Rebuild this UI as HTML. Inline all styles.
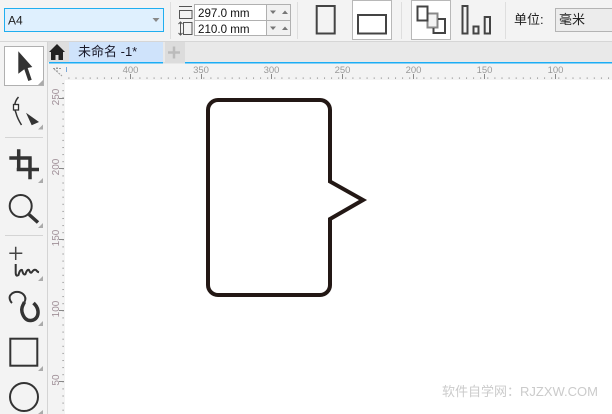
<!DOCTYPE html>
<html lang="zh"><head><meta charset="utf-8"><style>
html,body{margin:0;padding:0;width:612px;height:414px;overflow:hidden;background:#f3f3f3}
svg{position:absolute;left:0;top:0}
text{font-family:"Liberation Sans","Noto Sans CJK SC",sans-serif}
</style></head><body>
<svg width="612" height="414" viewBox="0 0 612 414" xmlns="http://www.w3.org/2000/svg">
<defs>
<pattern id="hd" x="4.5" y="77" width="7.1" height="2" patternUnits="userSpaceOnUse"><rect width="1" height="1.2" y=".5" fill="#888"/></pattern>
<pattern id="vd" x="62" y="5" width="2" height="7.1" patternUnits="userSpaceOnUse"><rect width="1.2" height="1" x=".5" fill="#888"/></pattern>
</defs>
<rect width="612" height="414" fill="#f3f3f3"/>
<!-- top bar -->
<rect x="0" y="41" width="612" height="1" fill="#d6d6d6"/>
<rect x="4.500" y="8.500" width="159" height="23" fill="#dff0fe" stroke="#20aeef"/>
<text x="8" y="24.500" font-size="12" fill="#222">A4</text>
<path d="M152.500 18h7l-3.500 4z" fill="#888"/>
<rect x="170" y="2" width="1" height="37" fill="#dedede"/>
<!-- page size icons -->
<g fill="none" stroke="#555" stroke-width="1">
<path d="M179 6.500h13M179.500 10.500h12.500v8h-12.500z"/>
<path d="M180.500 22v13M178.500 24l2-2 2 2M178.500 33l2 2 2-2M183.500 22.500h8.500v12h-8.500z"/>
</g>
<rect x="194.500" y="4.500" width="96" height="31" fill="#fff" stroke="#b0b0b0"/>
<rect x="266.500" y="5" width="24" height="30" fill="#f1f1f1"/>
<path d="M266.500 4v32M290.500 4v32M194 20.500h97" stroke="#b0b0b0"/>
<text x="198" y="17" font-size="11.600" fill="#111">297.0 mm</text>
<text x="198" y="33" font-size="11.600" fill="#111">210.0 mm</text>
<path d="M270 10.500h6l-3 3.500zM282 14h6l-3-3.500zM270 26.500h6l-3 3.500zM282 30h6l-3-3.500z" fill="#777"/>
<rect x="297" y="2" width="1" height="37" fill="#dedede"/>
<!-- orientation -->
<rect x="316.700" y="6" width="18" height="27.500" fill="none" stroke="#444" stroke-width="2"/>
<rect x="352.500" y=".5" width="39" height="39" fill="#fff" stroke="#b8b8b8"/>
<rect x="358" y="15" width="28" height="18.500" fill="none" stroke="#444" stroke-width="2"/>
<rect x="401" y="2" width="1" height="37" fill="#dedede"/>
<rect x="411.500" y=".5" width="39" height="39" fill="#fff" stroke="#b8b8b8"/>
<rect x="427.500" y="13.500" width="10" height="14" fill="#f3f3f3" stroke="#888" stroke-width="2"/>
<g fill="none" stroke="#444" stroke-width="2">
<rect x="417.500" y="6.500" width="10" height="14"/>
<path d="M438 19h7v14h-11.500v-5"/>
</g>
<g fill="none" stroke="#444" stroke-width="2">
<rect x="462.500" y="6" width="5" height="27.500"/>
<rect x="473.500" y="26.500" width="5" height="7"/>
<rect x="484.700" y="17" width="5.300" height="16.500"/>
</g>
<rect x="505" y="2" width="1" height="37" fill="#dedede"/>
<text x="514" y="24" font-size="13" fill="#222">单位:</text>
<rect x="555.500" y="8.500" width="60" height="23" fill="#ececec" stroke="#b4b4b4"/>
<text x="559" y="24" font-size="13" fill="#222">毫米</text>
<!-- tab bar -->
<rect x="48" y="42" width="564" height="20" fill="#e9e9e9"/>
<rect x="48" y="42" width="21" height="20" fill="#dedede"/>
<path d="M57 44l-8 8h2v8h4.500v-5h3v5H63v-8h2z" fill="#222"/>
<rect x="69" y="42" width="94" height="20" fill="#cfe3fb"/>
<text x="78" y="56" font-size="13" fill="#1a1a2a">未命名 -1*</text>
<rect x="165" y="42" width="20" height="20" fill="#dcdcdc"/>
<path d="M168 52.500h12M174 46.500v12" stroke="#bbb" stroke-width="2.500"/>
<rect x="49" y="62" width="563" height="1.500" fill="#1badf5"/>
<rect x="163" y="62" width="22" height="1.500" fill="#dcdcdc"/>
<!-- rulers -->
<rect x="47" y="42" width="1" height="372" fill="#d4d4d4"/>
<rect x="65" y="80" width="547" height="334" fill="#fff"/>
<rect x="65" y="77" width="547" height="2" fill="url(#hd)"/>
<rect x="62" y="80" width="2" height="334" fill="url(#vd)"/>
<g fill="#999" font-size="9.500" text-anchor="middle">
<text x="130.500" y="73">400</text><text x="201" y="73">350</text><text x="271.500" y="73">300</text><text x="342.500" y="73">250</text><text x="413.500" y="73">200</text><text x="484.500" y="73">150</text><text x="555.500" y="73">100</text>
</g>
<path d="M130.500 74v5M201.500 74v5M271.500 74v5M342.500 74v5M413.500 74v5M484.500 74v5M555.500 74v5M59 98.500h5M59 168.500h5M59 239.500h5M59 310.500h5M59 381.500h5" stroke="#888"/>
<g fill="#a09098" font-size="10" text-anchor="middle">
<text transform="translate(59 97) rotate(-90)">250</text>
<text transform="translate(59 167) rotate(-90)">200</text>
<text transform="translate(59 238) rotate(-90)">150</text>
<text transform="translate(59 309) rotate(-90)">100</text>
<text transform="translate(59 380) rotate(-90)">50</text>
</g>
<path d="M53 68.500h9M57 67v6M54 69l8 7" stroke="#999" fill="none" stroke-dasharray="2 1"/>
<path d="M66.500 67v5" stroke="#7aa7d8"/>
<!-- left toolbox -->
<rect x="4.500" y="46.500" width="39" height="39" fill="#fff" stroke="#b0b0b0"/>
<path d="M18.300 51.300V73.700L24.300 69.300 28.300 81 31.700 79.700 27.700 68 32.300 67z" fill="#333"/>
<path d="M38 85h5v-5z" fill="#aaa"/>
<!-- shape tool -->
<path d="M18.500 97C14 102 14 108 16 113 17 117 19 121 21.500 125" fill="none" stroke="#333" stroke-width="1.500"/>
<rect x="13.500" y="104.500" width="5" height="5.500" fill="#fff" stroke="#333" stroke-width="1.300"/>
<path d="M26 112.700L39 122 31.700 125.300z" fill="#333"/>
<path d="M38 129.500h5v-5z" fill="#aaa"/>
<rect x="5" y="137" width="38" height="1" fill="#d4d4d4"/>
<!-- crop -->
<path d="M18.700 149.300V170M9.300 158H31.700M30 158V179.300M16.700 169.500H39" fill="none" stroke="#333" stroke-width="3.500"/>
<path d="M38 183h5v-5z" fill="#aaa"/>
<!-- zoom -->
<circle cx="20.700" cy="206" r="11" fill="none" stroke="#333" stroke-width="2"/>
<path d="M29 214.500l9 8" stroke="#333" stroke-width="3.500"/>
<path d="M38 228h5v-5z" fill="#aaa"/>
<rect x="5" y="235" width="38" height="1" fill="#d4d4d4"/>
<!-- freehand -->
<path d="M15.700 246.700v13.300M9.300 253.300h13" stroke="#444" stroke-width="1.500"/>
<path d="M15.700 264V273Q16 277 18.500 275 20 269 22 270 23.500 276 25.500 274 27 269 29 270 30.500 274 32 272 34 269 36 270 37.500 272 39 272.300" fill="none" stroke="#333" stroke-width="2"/>
<path d="M38 281h5v-5z" fill="#aaa"/>
<!-- artistic curve -->
<path d="M12 303C9 300 9 296 11 294.500 14 291 20 291 23.500 294.500 26 297 25.500 300 24.500 302" fill="none" stroke="#333" stroke-width="2"/>
<path d="M24.500 302C23 305 21 308 22 312 23.500 318 27 321 31 320.500 36 320 38.500 316 38 311 37.500 307 35.500 305 33.500 303" fill="none" stroke="#333" stroke-width="3.500"/>
<path d="M38 326h5v-5z" fill="#aaa"/>
<!-- rect -->
<rect x="10.300" y="338.700" width="27" height="27" fill="none" stroke="#333" stroke-width="2"/>
<path d="M38 371h5v-5z" fill="#aaa"/>
<!-- ellipse -->
<circle cx="24" cy="397" r="14" fill="none" stroke="#333" stroke-width="2"/>
<path d="M38 414h5v-4z" fill="#aaa"/>
<!-- callout shape -->
<path d="M218 100H320a10 10 0 0 1 10 10V181.500L363 200 330 219V285a10 10 0 0 1-10 10H218a10 10 0 0 1-10-10V110a10 10 0 0 1 10-10z" fill="#fff" stroke="#231815" stroke-width="4"/>
<text x="442" y="396" font-size="13" fill="#cbcbcb">软件自学网：RJZXW.COM</text>
</svg>
</body></html>
